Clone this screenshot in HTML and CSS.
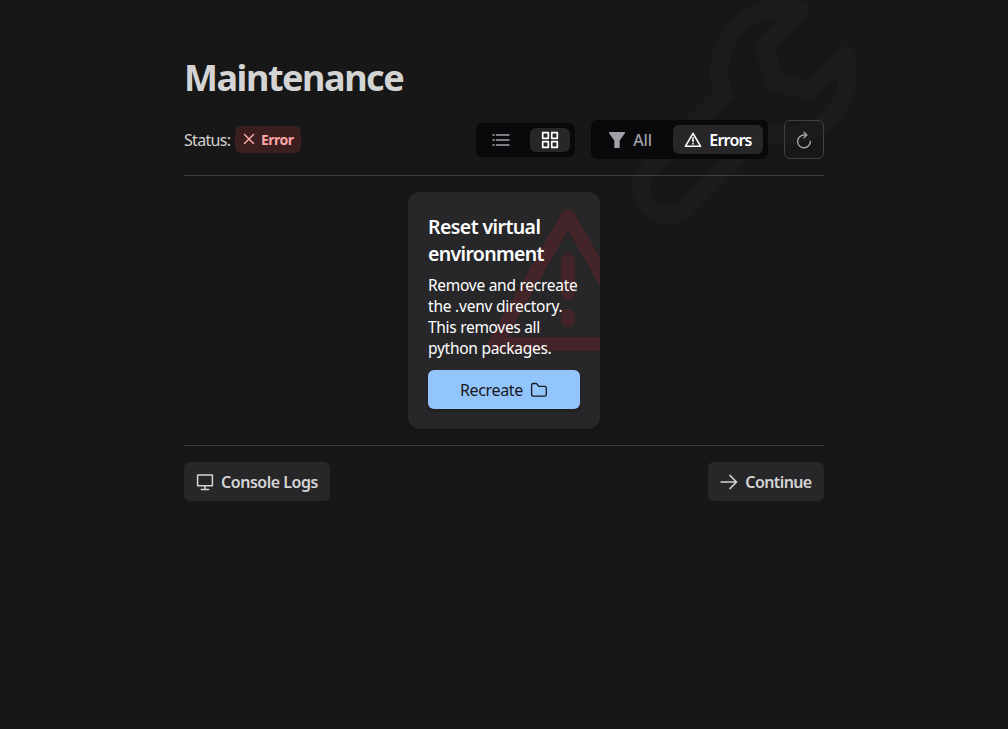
FILE: index.html
```html
<!DOCTYPE html>
<html lang="en">
<head>
<meta charset="utf-8">
<title>Maintenance</title>
<link rel="stylesheet" href="styles.css">
</head>
<body>
<svg class="wrench" viewBox="0 0 224 224"><path d="M168 10L133 46L142 82L177.500 90.500L213.500 55.500A63 63 0 0 1 129.500 131.500L53.500 208.500A27 27 0 0 1 15.500 170.500L92 94A63 63 0 0 1 168 10Z"/></svg>
<main class="page">
  <h1 class="title">Maintenance</h1>
  <div class="toolbar">
    <div class="status"><span class="status-label">Status:</span>
      <span class="tag"><svg class="icon" width="12" height="12" viewBox="0 0 12 12"><path d="M1.500 1.500L10.500 10.500M10.500 1.500L1.500 10.500" stroke-width="1.500"/></svg><span class="tag-text">Error</span></span>
    </div>
    <div class="controls">
      <div class="segments views">
        <button class="segment" aria-label="List"><svg class="icon" width="18" height="18" viewBox="0 0 18 18"><path d="M4.500 4H17M4.500 9H17M4.500 14H17M1 4H2.200M1 9H2.200M1 14H2.200" stroke-width="1.500"/></svg></button>
        <button class="segment active" aria-label="Grid"><svg class="icon" width="18" height="18" viewBox="0 0 18 18"><path d="M1.700 1.700H7.300V7.300H1.700ZM10.700 1.700H16.300V7.300H10.700ZM1.700 10.700H7.300V16.300H1.700ZM10.700 10.700H16.300V16.300H10.700Z" stroke-width="1.700"/></svg></button>
      </div>
      <div class="segments filters">
        <button class="segment all"><svg class="icon" width="16" height="16" viewBox="0 0 16 16"><path class="solid" d="M0.500 0H15.500Q16.400 .7 15.700 1.600L10.700 8.500V15.200Q10.600 16 9.800 16H6.200Q5.400 16 5.300 15.200V8.500L.3 1.600Q-.4 .7 .5 0Z"/></svg><span class="all-text">All</span></button>
        <button class="segment active errors"><svg class="icon" width="18" height="18" viewBox="0 0 18 18"><path d="M9 2.300L16.600 15.300H1.400ZM9 6.800V10.500M9 12.500V13" stroke-width="1.600"/></svg><span class="errors-text">Errors</span></button>
      </div>
      <button class="refresh" aria-label="Refresh"><svg class="icon" width="16" height="18" viewBox="0 0 16 18"><path d="M10.800 4H8A6.400 6.400 0 1 0 14.400 10.200M8 1.200L10.900 4L8 6.800" stroke-width="1.400"/></svg></button>
    </div>
  </div>
  <section class="tasks">
    <article class="card">
      <svg class="warning" viewBox="0 0 160 160"><path d="M80 17L153 145H7ZM80 62V94M80 117V121"/></svg>
      <h2 class="card-title"><span class="ct-1">Reset virtual</span><br><span class="ct-2">environment</span></h2>
      <p class="card-text"><span class="cp-1">Remove and recreate</span><br><span class="cp-2">the .venv directory.</span><br><span class="cp-3">This removes all</span><br><span class="cp-4">python packages.</span></p>
      <button class="recreate"><span class="recreate-text">Recreate</span><svg class="icon" width="18" height="16" viewBox="0 0 18 16"><path d="M1.600 12.500V3.200Q1.600 1.500 3.200 1.500H5.800Q6.600 1.500 7 2.100L8.700 4.300H14.600Q16.300 4.300 16.300 6V12.500Q16.300 14.200 14.600 14.200H3.300Q1.600 14.200 1.600 12.500Z" stroke-width="1.300"/></svg></button>
    </article>
  </section>
  <footer class="actions">
    <button class="action console"><svg class="icon" width="18" height="18" viewBox="0 0 18 18"><path d="M1.600 2H16.400V12.700H1.600ZM9 12.700V16.300M5.300 16.400H12.700" stroke-width="1.500"/></svg><span class="console-text">Console Logs</span></button>
    <button class="action continue"><svg class="icon" width="18" height="18" viewBox="0 0 18 18"><path d="M1.200 9H16.500M10 2.500L16.500 9L10 15.500" stroke-width="1.700"/></svg><span class="continue-text">Continue</span></button>
  </footer>
</main>
</body>
</html>
```
FILE: styles.css
```css
* { box-sizing: border-box; }
body { margin: 0; height: 729px; overflow: hidden; position: relative; background: #171717; color: #d4d4d4; font: 16px/24px "Noto Sans", "Open Sans", sans-serif; }
button { font: inherit; border: 0; padding: 0; margin: 0; color: inherit; background: none; display: flex; align-items: center; justify-content: center; }
span { white-space: nowrap; }
.icon { display: block; flex: none; fill: none; stroke: currentColor; stroke-linecap: round; stroke-linejoin: round; }
.icon .solid { fill: currentColor; stroke: none; }
.wrench { position: absolute; left: 632px; top: 0; width: 224px; height: 224px; fill: none; stroke: #1b1b1b; stroke-width: 19; stroke-linejoin: round; }
.page { position: relative; width: 640px; margin: 0 auto; padding-top: 56px; }
.title { margin: 0; font-size: 36px; line-height: 44px; font-weight: 700; letter-spacing: -1.45px; }
.toolbar { display: flex; justify-content: space-between; align-items: center; height: 76px; padding-top: 3px; border-bottom: 1px solid #3f3f42; }
.status { display: flex; align-items: center; gap: 5px; }
.status-label { width: 46px; padding-top: 1px; letter-spacing: -0.7px; }
.tag { display: flex; align-items: center; gap: 6px; height: 27px; width: 66px; padding-left: 8px; border-radius: 6px; background: #3b1e1f; color: #fca5a5; font-size: 14px; font-weight: 700; letter-spacing: -0.55px; }
.tag-text { padding-top: 1px; }
.controls { display: flex; align-items: center; gap: 16px; }
.segments { display: flex; background: #09090b; border-radius: 6px; color: #a1a1aa; }
.segment { border-radius: 6px; }
.segment.active { background: #27272a; color: #fff; }
.views { width: 99px; height: 34px; margin-top: 1px; padding: 5px; justify-content: space-between; }
.views .segment { width: 40px; height: 24px; }
.filters { width: 177px; height: 39px; padding: 5px; justify-content: space-between; font-weight: 500; }
.filters .segment { padding-top: 2px; }
.all { width: 69px; gap: 8px; letter-spacing: -0.2px; }
.errors { width: 90px; gap: 7px; font-weight: 600; letter-spacing: -0.8px; }
.refresh { width: 40px; height: 39px; padding-top: 1px; border: 1px solid #3f3f46; border-radius: 6px; color: #a1a1aa; }
.tasks { display: flex; justify-content: center; padding: 16px 0; border-bottom: 1px solid #3f3f42; }
.card { position: relative; overflow: hidden; width: 192px; height: 237px; padding: 21px 20px 20px; border-radius: 12px; background: #27272a; color: #fff; box-shadow: 0 1px 3px #0003; }
.warning { position: absolute; left: 80px; top: 7px; width: 160px; height: 160px; fill: none; stroke: #432529; stroke-width: 14; stroke-linecap: round; stroke-linejoin: round; }
.card-title { position: relative; margin: 0; font-size: 19.500px; line-height: 27px; font-weight: 600; }
.ct-1 { letter-spacing: -0.58px; }
.ct-2 { letter-spacing: -0.66px; }
.card-text { position: relative; margin: 8px 0 11px; font-size: 15.500px; line-height: 21px; letter-spacing: -0.27px; }
.cp-2 { letter-spacing: -0.22px; }
.cp-3 { letter-spacing: -0.3px; }
.recreate { position: relative; width: 152px; height: 39px; gap: 7px; border-radius: 6px; background: #93c5fd; color: #18181b; box-shadow: 0 2px 3px #0003; letter-spacing: -0.35px; }
.recreate-text { padding-top: 1px; }
.actions { display: flex; justify-content: space-between; padding-top: 16px; }
.action { height: 39px; border-radius: 6px; background: #27272a; gap: 7px; font-weight: 600; }
.console { width: 146px; letter-spacing: -0.47px; }
.continue { width: 116px; letter-spacing: -0.6px; }
```
